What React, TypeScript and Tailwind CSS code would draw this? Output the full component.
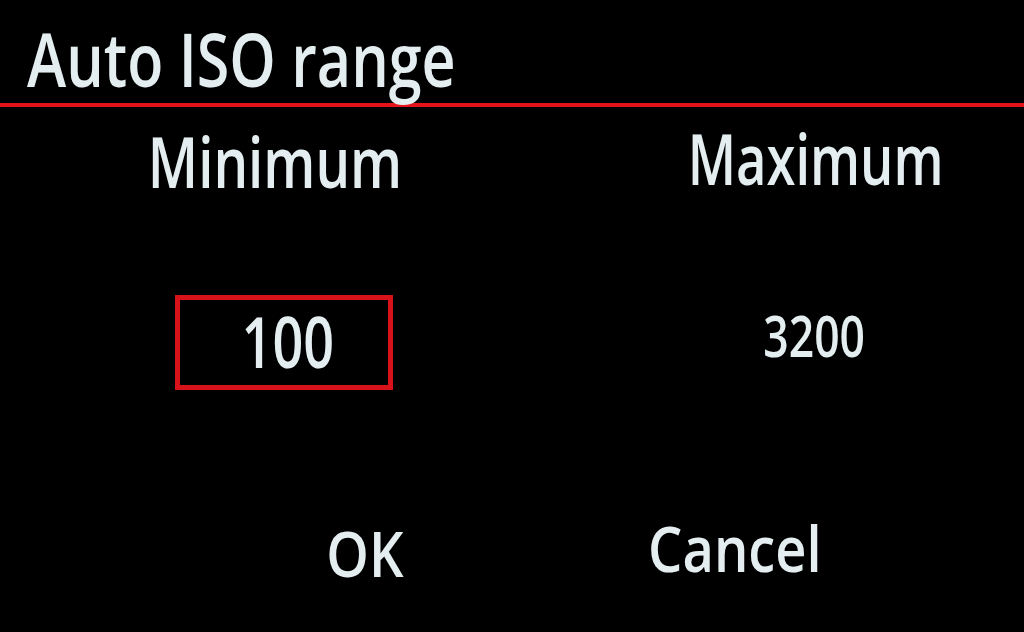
export default function App() {
  const font = { fontFamily: '"Open Sans", "Noto Sans", sans-serif' };
  return (
    <div
      className="w-[1024px] h-[632px] bg-black overflow-hidden text-[#e4eef0] font-semibold"
      style={font}
    >
      <div className="h-[103px] pt-[22px] pl-[27px]">
        <span className="inline-block text-[74px] leading-none origin-left [transform:scaleX(0.8)] whitespace-nowrap">
          Auto ISO range
        </span>
      </div>
      <div className="h-[4px] bg-[#e3121b]" />

      <div className="mt-[16px] flex items-start h-[70px]">
        <div className="w-[550px] flex justify-center mt-[3px]">
          <span className="inline-block text-[70px] leading-none [transform:scaleX(0.78)] whitespace-nowrap">
            Minimum
          </span>
        </div>
        <div className="w-[400px] ml-[66px] flex justify-center">
          <span className="inline-block text-[70px] leading-none [transform:scaleX(0.75)] whitespace-nowrap">
            Maximum
          </span>
        </div>
      </div>

      <div className="mt-[102px] flex items-start">
        <div className="ml-[175px] w-[218px] h-[95px] border-[5px] border-[#d8121b] flex justify-center pt-[5px] pl-[8px]">
          <span className="inline-block text-[71px] leading-none [transform:scaleX(0.76)]">100</span>
        </div>
        <div className="ml-[221px] w-[400px] flex justify-center mt-[12px]">
          <span className="inline-block text-[57px] leading-none [transform:scaleX(0.78)]">3200</span>
        </div>
      </div>

      <div className="mt-[126px] flex items-start">
        <div className="ml-[265px] w-[200px] flex justify-center mt-[5px]">
          <span className="inline-block text-[63px] leading-none [transform:scaleX(0.86)]">OK</span>
        </div>
        <div className="ml-[170px] w-[200px] flex justify-center">
          <span className="inline-block text-[63px] leading-none [transform:scaleX(0.86)]">Cancel</span>
        </div>
      </div>
    </div>
  );
}
